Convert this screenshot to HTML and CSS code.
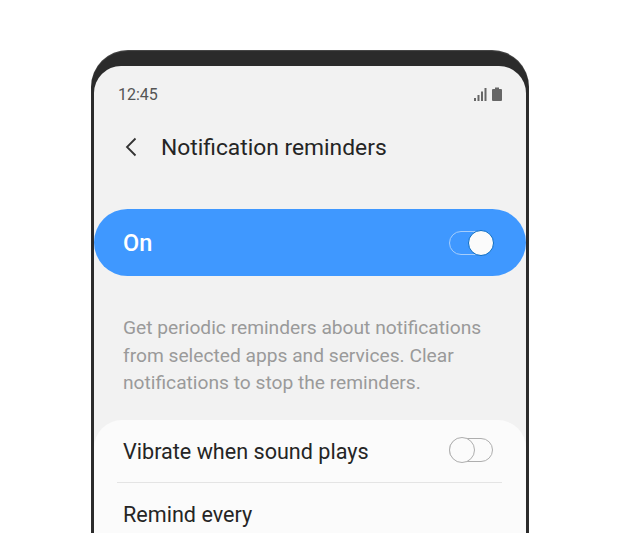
FILE: index.html
```html
<!DOCTYPE html>
<html lang="en">
<head>
    <meta charset="UTF-8">
    <title>Notification reminders</title>
    <link rel="stylesheet" href="styles.css">
</head>
<body>
    <div class="phone">
        <div class="screen">
            <div class="status-bar">
                <span class="time">12:45</span>
                <div class="status-icons">
                    <svg width="13" height="15" viewBox="0 0 13 15" fill="#666">
                        <rect x="0" y="11" width="2" height="3"/>
                        <rect x="3.5" y="8" width="2" height="6"/>
                        <rect x="7" y="4.5" width="2" height="9.5"/>
                        <rect x="10.5" y="1" width="2" height="13"/>
                    </svg>
                    <svg width="10" height="15" viewBox="0 0 10 15" fill="#666">
                        <path d="M3 0.5h4v1.5h2a1 1 0 0 1 1 1v10a1 1 0 0 1-1 1h-8a1 1 0 0 1-1-1v-10a1 1 0 0 1 1-1h2z"/>
                    </svg>
                </div>
            </div>

            <div class="title-bar">
                <svg class="back-icon" width="14" height="20" viewBox="0 0 14 20" fill="none" stroke="#333" stroke-width="1.8">
                    <path d="M11.5 1.5L3 10l8.5 8.5"/>
                </svg>
                <h1>Notification reminders</h1>
            </div>

            <div class="master-switch">
                <span>On</span>
                <div class="toggle toggle-on"><div class="knob"></div></div>
            </div>

            <p class="description">Get periodic reminders about notifications from selected apps and services. Clear notifications to stop the reminders.</p>

            <div class="card">
                <div class="row">
                    <span>Vibrate when sound plays</span>
                    <div class="toggle"><div class="knob"></div></div>
                </div>
                <div class="divider"></div>
                <div class="row">
                    <span>Remind every</span>
                </div>
            </div>
        </div>
    </div>
</body>
</html>
```

FILE: styles.css
```css
html, body {
    height: 533px;
    overflow: hidden;
}

body {
    margin: 0;
    background: #fff;
    font-family: Roboto, sans-serif;
    color: #252525;
}

.phone {
    box-sizing: border-box;
    width: 438px;
    height: 483px;
    margin: 50px 0 0 91px;
    padding: 16px 3px 0;
    background: #2b2b2b;
    border-radius: 37px 37px 0 0;
    box-shadow: inset 0 1px 1px rgba(255, 255, 255, 0.15);
    overflow: hidden;
}

.screen {
    height: 100%;
    background: #f2f2f2;
    border-radius: 27px 27px 0 0;
    overflow: hidden;
}

.status-bar {
    display: flex;
    align-items: center;
    justify-content: space-between;
    height: 20px;
    padding: 18px 24px 0;
}

.time {
    font-size: 16px;
    color: #555;
}

.status-icons {
    display: flex;
    align-items: center;
    gap: 5px;
}

.title-bar {
    display: flex;
    align-items: center;
    gap: 23px;
    height: 32px;
    margin-top: 27px;
    padding-left: 30px;
}

.title-bar h1 {
    margin: 0;
    font-size: 22.8px;
    font-weight: 400;
}

.master-switch {
    display: flex;
    align-items: center;
    justify-content: space-between;
    height: 67px;
    margin-top: 46px;
    padding: 0 33px 0 29px;
    background: #3f98ff;
    border-radius: 34px;
    color: #fff;
    font-size: 23.5px;
    font-weight: 500;
}

.toggle {
    box-sizing: border-box;
    display: flex;
    align-items: center;
    width: 44px;
    height: 24px;
    border: 1.5px solid #aeaeae;
    border-radius: 12px;
}

.toggle-on {
    justify-content: flex-end;
    border-color: #a5cdfb;
}

.knob {
    box-sizing: border-box;
    flex: none;
    width: 26px;
    height: 26px;
    margin: 0 -1.5px;
    background: #fbfbfb;
    border: 1.5px solid #aeaeae;
    border-radius: 50%;
}

.toggle-on .knob {
    border-color: #0a6cc4;
}

.description {
    margin: 38px 29px 0;
    font-size: 19.2px;
    line-height: 27.5px;
    color: #9a9a9a;
}

.card {
    height: 200px;
    margin-top: 23px;
    padding-top: 1px;
    background: #fbfbfb;
    border-radius: 28px 28px 0 0;
}

.row {
    display: flex;
    align-items: center;
    justify-content: space-between;
    height: 61px;
    padding: 0 33px 0 29px;
    font-size: 21.6px;
}

.row .toggle {
    margin-bottom: 3px;
}

.divider {
    height: 1px;
    margin: 0 24px 1px 23px;
    background: #e4e4e4;
}
```
